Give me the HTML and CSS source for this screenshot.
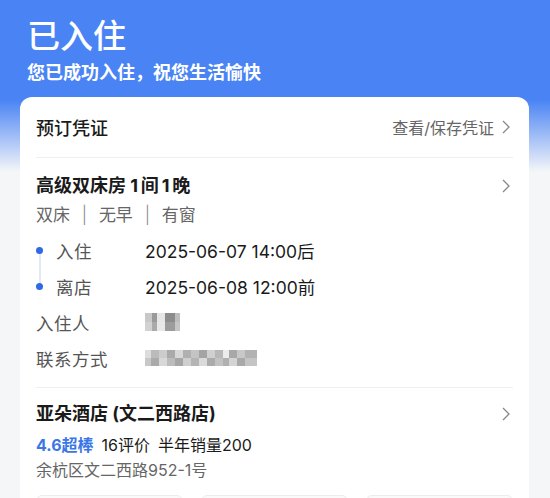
FILE: index.html
```html
<!DOCTYPE html>
<html lang="zh-CN">
<head>
  <meta charset="UTF-8" />
  <meta name="viewport" content="width=device-width, initial-scale=1" />
  <title>已入住</title>
  <link rel="stylesheet" href="styles.css">
</head>
<body>
  <div class="hero">
    <h1>已入住</h1>
    <p class="hero-sub">您已成功入住，祝您生活愉快</p>
  </div>

  <div class="card">
    <div class="card-head">
      <span class="card-title">预订凭证</span>
      <span class="card-link">查看/保存凭证
        <svg class="chev" viewBox="0 0 8 14"><path d="M1 1l6 6-6 6" /></svg>
      </span>
    </div>

    <div class="room">
      <div class="row-title">
        <span>高级双床房 1&thinsp;间&thinsp;1&thinsp;晚</span>
        <svg class="chev" viewBox="0 0 8 14"><path d="M1 1l6 6-6 6" /></svg>
      </div>
      <div class="tags">双床 <i>|</i> 无早 <i>|</i> 有窗</div>

      <div class="timeline">
        <div class="info-row">
          <span class="dot"></span>
          <span class="label short">入住</span>
          <span class="value">2025-06-07 14:00后</span>
        </div>
        <div class="info-row">
          <span class="dot"></span>
          <span class="label short">离店</span>
          <span class="value">2025-06-08 12:00前</span>
        </div>
      </div>
      <div class="info-row">
        <span class="label">入住人</span>
        <span class="mosaic mosaic-name"></span>
      </div>
      <div class="info-row">
        <span class="label">联系方式</span>
        <span class="mosaic mosaic-phone"></span>
      </div>
    </div>

    <div class="hotel">
      <div class="row-title">
        <span>亚朵酒店 (文二西路店)</span>
        <svg class="chev" viewBox="0 0 8 14"><path d="M1 1l6 6-6 6" /></svg>
      </div>
      <div class="rating">
        <span class="score">4.6超棒</span>
        <span>16评价</span>
        <span>半年销量200</span>
      </div>
      <div class="address">余杭区文二西路952-1号</div>
    </div>

    <div class="actions">
      <div class="action"></div>
      <div class="action"></div>
      <div class="action"></div>
    </div>
  </div>
</body>
</html>
```

FILE: styles.css
```css
body {
  margin: 0;
  background: linear-gradient(180deg, #4a84f4 0, #4a84f4 100px, #f5f6f8 172px);
  font-family: Inter, "Noto Sans CJK SC", "Noto Sans", sans-serif;
  color: #1a1a1a;
  min-height: 498px;
}
.hero {
  padding: 17px 27px 0;
  color: white;
}
.hero h1 {
  margin: 0;
  font-size: 33px;
  line-height: 38px;
  font-weight: 500;
}
.hero-sub {
  margin: 6px 0 0;
  font-size: 18px;
  line-height: 24px;
  font-weight: 700;
}
.card {
  margin: 12px 21px 0 20px;
  background: white;
  border-radius: 12px;
  padding: 0 16px;
}
.card-head {
  height: 60px;
  display: flex;
  align-items: center;
  justify-content: space-between;
  border-bottom: 1px solid #efefef;
}
.card-title {
  font-size: 18px;
  font-weight: 500;
}
.card-link {
  display: flex;
  align-items: center;
  gap: 8px;
  font-size: 16px;
  color: #666;
}
.chev {
  width: 8px;
  height: 14px;
  margin-right: 3px;
}
.chev path {
  fill: none;
  stroke: #888;
  stroke-width: 1.3;
}
.room {
  padding: 16px 0 11px;
  border-bottom: 1px solid #efefef;
}
.row-title {
  display: flex;
  align-items: center;
  justify-content: space-between;
  font-size: 18px;
  font-weight: 700;
  line-height: 24px;
}
.tags {
  margin-top: 5px;
  font-size: 17px;
  line-height: 24px;
  color: #666;
}
.tags i {
  font-style: normal;
  font-weight: 300;
  color: #888;
  margin: 0 7px;
}
.timeline {
  margin-top: 5px;
  position: relative;
}
.timeline::before {
  content: "";
  position: absolute;
  left: 3px;
  top: 18px;
  height: 36px;
  width: 2px;
  background: #e3e8f5;
}
.info-row {
  height: 36px;
  display: flex;
  align-items: center;
  font-size: 17.5px;
}
.dot {
  width: 7px;
  height: 7px;
  border-radius: 50%;
  background: #2f69e6;
  margin-right: 13px;
  position: relative;
}
.label {
  width: 109px;
  color: #555;
  letter-spacing: 0.5px;
}
.label.short {
  width: 89px;
}
.value {
  color: #1a1a1a;
}
.mosaic {
  display: block;
  height: 18px;
  background-size: 100% 50%;
  background-repeat: no-repeat;
}
.mosaic-name {
  width: 35px;
  background-image:
    linear-gradient(90deg, #c8c8c8 0 7px, #9a9a9a 7px 12px, #e6e6e6 12px 20px, #8c8c8c 20px 30px, #bdbdbd 30px),
    linear-gradient(90deg, #d2d2d2 0 7px, #aaa 7px 12px, #e8e8e8 12px 20px, #9c9c9c 20px 30px, #c6c6c6 30px);
  background-position: 0 0, 0 100%;
}
.mosaic-phone {
  width: 112px;
  height: 16px;
  background-image:
    linear-gradient(90deg, #ddd 0 6px, #bbb 6px 14px, #ccc 14px 22px, #aaa 22px 30px, #d8d8d8 30px 38px, #b0b0b0 38px 46px, #c4c4c4 46px 54px, #a4a4a4 54px 62px, #d0d0d0 62px 70px, #b8b8b8 70px 78px, #ececec 78px 84px, #a8a8a8 84px 92px, #c8c8c8 92px 100px, #b2b2b2 100px),
    linear-gradient(90deg, #c8c8c8 0 6px, #aaa 6px 14px, #d8d8d8 14px 22px, #bcbcbc 22px 30px, #a6a6a6 30px 38px, #cfcfcf 38px 46px, #b4b4b4 46px 54px, #dadada 54px 62px, #ababab 62px 70px, #c2c2c2 70px 78px, #b0b0b0 78px 84px, #d4d4d4 84px 92px, #a9a9a9 92px 100px, #c4c4c4 100px);
  background-position: 0 0, 0 100%;
}
.hotel {
  padding-top: 14px;
}
.rating {
  margin-top: 8px;
  display: flex;
  gap: 8px;
  font-size: 16px;
  line-height: 22px;
}
.score {
  color: #3a77e6;
  font-weight: 700;
}
.address {
  margin-top: 3px;
  font-size: 16px;
  line-height: 22px;
  color: #666;
}
.actions {
  display: grid;
  grid-template-columns: repeat(3, 1fr);
  gap: 18px;
  padding: 14px 0 16px;
}
.action {
  height: 36px;
  border: 1px solid #ececec;
  border-radius: 6px;
  background: #fafafa;
}
```
